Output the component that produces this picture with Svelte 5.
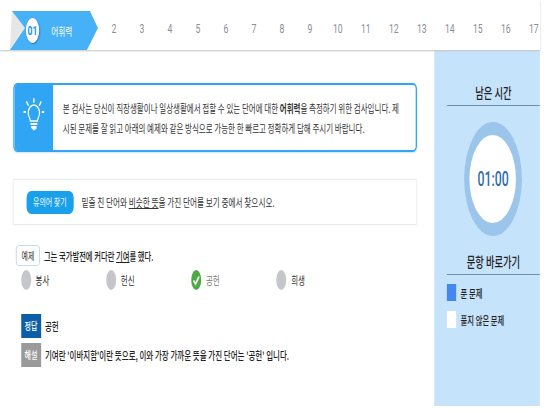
<script>
  const numbers = Array.from({ length: 16 }, (_, i) => i + 2);
  const options = [
    { label: '봉사' },
    { label: '헌신' },
    { label: '공헌', correct: true },
    { label: '희생' }
  ];
</script>

<div class="page">
  <header class="top">
    <div class="tab">
      <svg class="tab-bg" viewBox="0 0 88 39" preserveAspectRatio="none" aria-hidden="true">
        <polygon points="2,0 15,17 0,39" fill="#e6e6e6" />
        <polygon points="2,0 80,0 88,17 77,39 0,39 15,17" fill="#47b1f8" />
      </svg>
      <span class="tab-no">01</span>
      <span class="tab-name">어휘력</span>
    </div>
    <ol class="nums">
      {#each numbers as n}<li>{n}</li>{/each}
    </ol>
  </header>

  <div class="body">
    <main class="content">
      <section class="notice">
        <div class="notice-icon">
          <svg viewBox="0 0 30 40" width="32" height="40" preserveAspectRatio="none" fill="none" stroke="#fff" stroke-width="1.6" stroke-linecap="round" aria-hidden="true">
            <path d="M10 23c0-3-3-4-3-8a8 8 0 0 1 16 0c0 4-3 5-3 8z" />
            <path d="M11 26h8M12 29h6" stroke-width="2" />
            <path d="M15 32l-3-2h6z" fill="#fff" stroke-width="1" />
            <path d="M15 1v3M5 4l2 3M25 4l-2 3M1 14h2M27 14h2" stroke-width="2" />
          </svg>
        </div>
        <p>본 검사는 당신이 직장생활이나 일상생활에서 접할 수 있는 단어에 대한 <b>어휘력</b>을 측정하기 위한 검사입니다. 제<br />시된 문제를 잘 읽고 아래의 예제와 같은 방식으로 가능한 한 빠르고 정확하게 답해 주시기 바랍니다.</p>
      </section>

      <section class="guide">
        <span class="pill">유의어 찾기</span>
        <span>밑줄 친 단어와 <u>비슷한 뜻</u>을 가진 단어를 보기 중에서 찾으시오.</span>
      </section>

      <section class="example">
        <span class="ex-badge">예제</span>
        <span class="ex-text">그는 국가발전에 커다란 <u>기여</u>를 했다.</span>
      </section>

      <ul class="options">
        {#each options as o}
          <li class:correct={o.correct}>
            <span class="radio">
              {#if o.correct}
                <svg viewBox="0 0 13 20" preserveAspectRatio="none" aria-hidden="true">
                  <path d="M3 10.5l2.6 3.5 4.6-7.5" fill="none" stroke="#fff" stroke-width="2" />
                </svg>
              {/if}
            </span>
            <span>{o.label}</span>
          </li>
        {/each}
      </ul>

      <div class="answer">
        <span class="tag blue">정답</span>
        <span>공헌</span>
      </div>
      <div class="answer explain">
        <span class="tag grey">해설</span>
        <span>기여란 '이바지함'이란 뜻으로, 이와 가장 가까운 뜻을 가진 단어는 '공헌' 입니다.</span>
      </div>
    </main>

    <aside class="side">
      <h2>남은 시간</h2>
      <div class="ring"><div class="hole"><span>01:00</span></div></div>
      <h2 class="second">문항 바로가기</h2>
      <div class="legend"><i class="done"></i>푼 문제</div>
      <div class="legend"><i class="todo"></i>풀지 않은 문제</div>
    </aside>
  </div>
</div>

<style>
  :global(body) {
    margin: 0;
    overflow: hidden;
    background: #fff;
  }
  .page {
    width: 813px;
    height: 406px;
    transform: scaleX(0.664);
    transform-origin: 0 0;
    font-family: "Noto Sans CJK KR", "Noto Sans", sans-serif;
    font-size: 11.3px;
    color: #333;
  }
  .top {
    display: flex;
    align-items: flex-end;
    height: 50px;
    padding-left: 15px;
    box-shadow: 0 1px 2px #c4c4c4;
    box-sizing: border-box;
    position: relative;
  }
  .tab {
    position: relative;
    display: flex;
    align-items: center;
    flex: none;
    width: 132.5px;
    height: 39px;
    color: #fff;
  }
  .tab-bg {
    position: absolute;
    inset: 0;
    width: 100%;
    height: 100%;
  }
  .tab-no {
    position: relative;
    width: 20px;
    height: 25px;
    margin-left: 24px;
    border-radius: 50%;
    background: #fff;
    color: #1f93e6;
    font: 700 13px/25px "Roboto", sans-serif;
    text-align: center;
    box-shadow: 1px 1px 2px #2577b5;
  }
  .tab-name {
    position: relative;
    margin-left: 18px;
    font-size: 11.5px;
  }
  .nums {
    display: flex;
    flex: none;
    margin: 0 0 0 3px;
    padding: 0;
    list-style: none;
    align-self: center;
    transform: translateY(3px);
  }
  .nums li {
    width: 42.17px;
    text-align: center;
    font: 13px "Roboto", sans-serif;
    color: #8a8f96;
  }
  .body {
    display: flex;
    height: 356px;
  }
  .content {
    width: 653.6px;
    flex: none;
    padding-left: 19.6px;
    box-sizing: border-box;
  }
  .notice {
    display: flex;
    width: 608px;
    height: 69px;
    margin-top: 33px;
    border: 2px solid #30a5f3;
    border-radius: 6px;
    box-sizing: border-box;
    overflow: hidden;
    box-shadow: 0 1px 2px #cfe6f7;
  }
  .notice-icon {
    display: flex;
    align-items: center;
    justify-content: center;
    flex: none;
    width: 58px;
    background: #30a5f3;
  }
  .notice p {
    margin: 0;
    padding-left: 15px;
    align-self: center;
    line-height: 20px;
    white-space: nowrap;
  }
  .notice b {
    font-weight: 700;
  }
  .guide {
    display: flex;
    align-items: center;
    gap: 12px;
    width: 608px;
    height: 46px;
    margin-top: 27px;
    padding-left: 19px;
    border: 1px solid #ececec;
    box-sizing: border-box;
    font-size: 11.5px;
    box-shadow: 0 0 2px #eee;
  }
  .pill {
    width: 71px;
    height: 23px;
    border-radius: 7px;
    background: #18a0ea;
    color: #fff;
    font-size: 10.5px;
    line-height: 22px;
    text-align: center;
  }
  .example {
    display: flex;
    align-items: center;
    gap: 6px;
    margin: 20px 0 0 4.5px;
  }
  .ex-badge {
    width: 36px;
    height: 21px;
    border: 1px solid #b5d3f0;
    border-radius: 4px;
    box-sizing: border-box;
    font-size: 10.5px;
    line-height: 19px;
    text-align: center;
  }
  .ex-text {
    font-size: 11px;
    font-weight: 500;
    color: #222;
  }
  .options {
    display: flex;
    margin: 4px 0 0 12px;
    padding: 0;
    list-style: none;
  }
  .options li {
    display: flex;
    align-items: center;
    width: 128.3px;
    height: 20px;
  }
  .radio {
    flex: none;
    width: 15px;
    height: 20px;
    margin-right: 7px;
    border-radius: 50%;
    background: #c4c6c9;
  }
  .radio svg {
    display: block;
    width: 100%;
    height: 100%;
  }
  .correct .radio {
    background: #4caa46;
  }
  .correct span:last-child {
    color: #777;
  }
  .answer {
    display: flex;
    align-items: center;
    gap: 6px;
    margin: 24px 0 0 12px;
    font-weight: 500;
    color: #222;
  }
  .explain {
    margin-top: 5px;
  }
  .tag {
    width: 30px;
    height: 24px;
    color: #fff;
    font-size: 10.5px;
    line-height: 23px;
    text-align: center;
  }
  .blue {
    background: #0b5fa8;
  }
  .grey {
    background: #9a9a9a;
  }
  .side {
    flex: none;
    width: 159.4px;
    background: #c6e3fc;
    padding-left: 19.6px;
    box-sizing: border-box;
  }
  .side h2 {
    margin: 32px 0 0;
    height: 23px;
    border-bottom: 1px solid #6f8fa8;
    font-size: 14px;
    font-weight: 500;
    line-height: 20px;
    text-align: center;
    color: #222;
  }
  .side h2.second {
    margin-top: 15px;
  }
  .ring {
    display: flex;
    align-items: center;
    justify-content: center;
    width: 87px;
    height: 114px;
    margin: 16px 0 0 25.6px;
    border-radius: 50%;
    background: #9cc5ec;
  }
  .hole {
    display: flex;
    align-items: center;
    justify-content: center;
    width: 70px;
    height: 88px;
    border-radius: 50%;
    background: #fff;
  }
  .hole span {
    font: 500 21px "Roboto", sans-serif;
    color: #2f6ca8;
    transform: scaleX(0.88);
  }
  .legend {
    display: flex;
    align-items: center;
    gap: 7px;
    height: 17px;
    margin-top: 10px;
    font-size: 11px;
    font-weight: 500;
    color: #222;
  }
  .side h2.second + .legend {
    margin-top: 9px;
  }
  .legend i {
    width: 13.5px;
    height: 17px;
  }
  .done {
    background: #4487ee;
  }
  .todo {
    background: #fff;
  }
</style>
